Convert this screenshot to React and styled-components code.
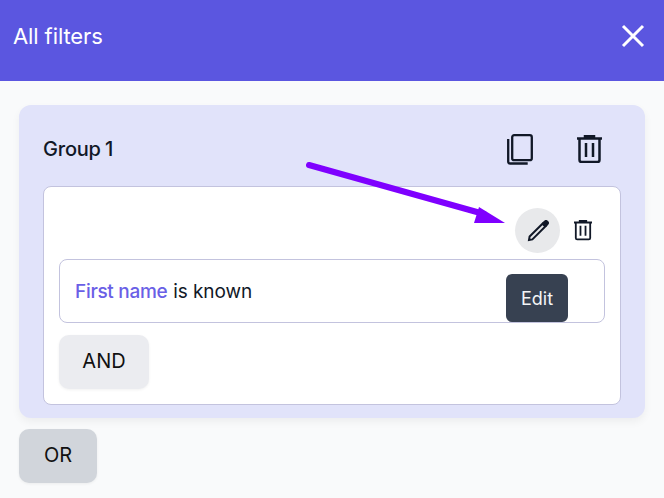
import React from "react";
import styled, { createGlobalStyle } from "styled-components";

const GlobalStyle = createGlobalStyle`
  html, body { margin: 0; padding: 0; }
  body {
    background: #f9fafb;
    font-family: "Inter", "Liberation Sans", sans-serif;
    color: #111827;
  }
`;

const Page = styled.div`
  position: relative;
  width: 664px;
  height: 498px;
  overflow: hidden;
  background: #f9fafb;
`;

const Header = styled.header`
  height: 81px;
  background: #5b56e0;
  display: flex;
  align-items: center;
  justify-content: space-between;
  padding: 0 19px 10px 13px;
  box-sizing: border-box;
  color: #fff;
`;

const Title = styled.h1`
  margin: 0;
  font-size: 22px;
  font-weight: 400;
  letter-spacing: -0.1px;
`;

const Content = styled.main`
  padding: 24px 19px 0;
  display: flex;
  flex-direction: column;
  align-items: flex-start;
  gap: 11px;
`;

const Group = styled.section`
  width: 626px;
  box-sizing: border-box;
  background: #e1e3fa;
  border-radius: 12px;
  padding: 0 24px 13px;
  box-shadow: 0 4px 8px rgba(0, 0, 0, 0.05);
`;

const GroupHead = styled.div`
  height: 81px;
  display: flex;
  align-items: center;
  padding: 7px 19px 0 0;
  box-sizing: border-box;
  gap: 44px;
`;

const GroupName = styled.h2`
  margin: 0 auto 0 0;
  font-size: 20px;
  font-weight: 500;
  letter-spacing: -0.2px;
  word-spacing: -1px;
`;

const Inner = styled.div`
  position: relative;
  background: #fff;
  border: 1px solid #c3c3de;
  border-radius: 8px;
  padding: 21px 15px 15px;
`;

const RuleTools = styled.div`
  display: flex;
  justify-content: flex-end;
  align-items: center;
  gap: 14px;
  padding-right: 13px;
  margin-bottom: 6px;
`;

const CircleButton = styled.div`
  width: 45px;
  height: 45px;
  border-radius: 50%;
  background: #e8e9eb;
  display: flex;
  align-items: center;
  justify-content: center;
`;

const Rule = styled.div`
  height: 64px;
  box-sizing: border-box;
  border: 1px solid #c3c3de;
  border-radius: 8px;
  padding: 0 15px;
  display: flex;
  align-items: center;
  font-size: 19px;
  letter-spacing: -0.1px;
  gap: 6px;
`;

const Field = styled.span`
  color: #6a5fe6;
  font-weight: 500;
  letter-spacing: -0.3px;
`;

const LogicButton = styled.div`
  width: ${(p) => p.$width}px;
  height: 54px;
  padding-bottom: 2px;
  box-sizing: border-box;
  border-radius: 10px;
  background: ${(p) => p.$bg};
  display: flex;
  align-items: center;
  justify-content: center;
  font-size: 20px;
  color: #111;
  margin-top: ${(p) => p.$top || 0}px;
  box-shadow: 0 1px 3px rgba(0, 0, 0, 0.06);
`;

const Tooltip = styled.div`
  position: absolute;
  left: 462px;
  top: 87px;
  width: 62px;
  height: 48px;
  border-radius: 6px;
  background: #374151;
  color: #f3f4f6;
  font-size: 18px;
  display: flex;
  align-items: center;
  justify-content: center;
`;

const ArrowOverlay = styled.svg`
  position: absolute;
  left: 0;
  top: 0;
  pointer-events: none;
`;

const Icon = styled.svg`
  display: block;
  fill: none;
  stroke: #111827;
  stroke-width: ${(p) => p.$stroke || 2}px;
`;

function CloseIcon() {
  return (
    <Icon width="24" height="24" viewBox="0 0 24 24" style={{ stroke: "#fff" }} $stroke={3}>
      <path d="M2 2 L22 22 M22 2 L2 22" />
    </Icon>
  );
}

function CopyIcon() {
  return (
    <Icon width="26" height="31" viewBox="0 0 26 31" $stroke={2.3}>
      <rect x="5.2" y="1.2" width="19.6" height="25" rx="2" />
      <path d="M1.2 5v22.5a2 2 0 0 0 2 2h17.5" />
    </Icon>
  );
}

function TrashIcon({ size }) {
  return (
    <Icon width={size} height={size * 1.12} viewBox="0 0 25 28" $stroke={2.5}>
      <path d="M0 3.5h25M8 3V1h9v2" />
      <path d="M2.5 4v21a2 2 0 0 0 2 2h16a2 2 0 0 0 2-2V4" />
      <path d="M9 8v14M16 8v14" />
    </Icon>
  );
}

function PencilIcon() {
  return (
    <Icon width="22" height="22" viewBox="0 0 22 22" $stroke={2}>
      <path d="M2 20l.6-3.4L15.5 3.7l2.8 2.8L5.4 19.4z" />
      <path d="M16.5 2.8l2.7 2.7 1.3-1.4a1.5 1.5 0 0 0 0-2.1l-.5-.5a1.5 1.5 0 0 0-2.1 0z" fill="#111827" />
    </Icon>
  );
}

export default function App() {
  return (
    <Page>
      <GlobalStyle />
      <Header>
        <Title>All filters</Title>
        <CloseIcon />
      </Header>
      <Content>
        <Group>
          <GroupHead>
            <GroupName>Group 1</GroupName>
            <CopyIcon />
            <TrashIcon size={25} />
          </GroupHead>
          <Inner>
            <RuleTools>
              <CircleButton>
                <PencilIcon />
              </CircleButton>
              <TrashIcon size={18} />
            </RuleTools>
            <Rule>
              <Field>First name</Field>
              <span>is known</span>
            </Rule>
            <LogicButton $width={90} $bg="#ebecf0" $top={12}>AND</LogicButton>
            <Tooltip>Edit</Tooltip>
          </Inner>
        </Group>
        <LogicButton $width={78} $bg="#d1d5db">OR</LogicButton>
      </Content>
      <ArrowOverlay width="664" height="498" viewBox="0 0 664 498">
        <path d="M309 165 L484 214" stroke="#7f00ff" strokeWidth="6" strokeLinecap="round" fill="none" />
        <path d="M479 207 L505 223 L474 223 Z" fill="#7f00ff" />
      </ArrowOverlay>
    </Page>
  );
}
